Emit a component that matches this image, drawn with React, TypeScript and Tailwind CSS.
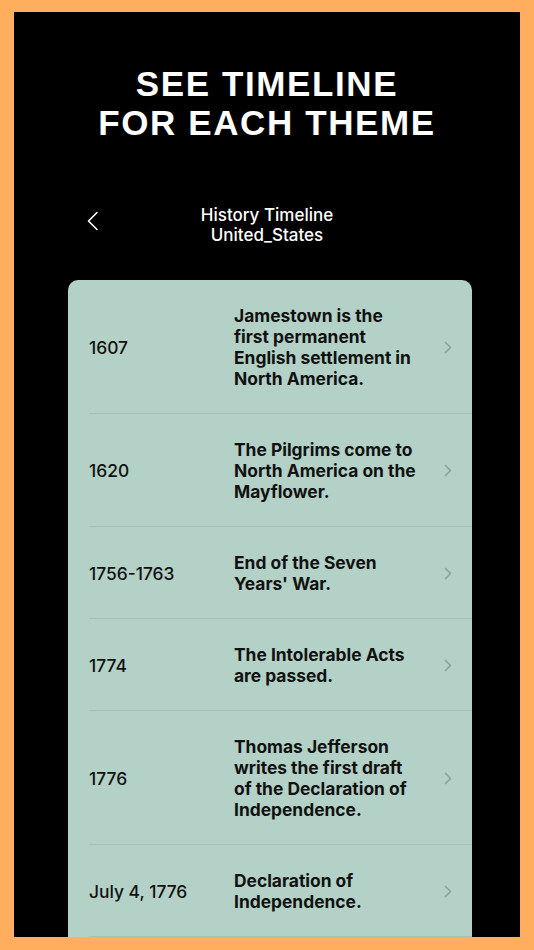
const events = [
  { date: '1607', text: 'Jamestown is the first permanent English settlement in North America.' },
  { date: '1620', text: 'The Pilgrims come to North America on the Mayflower.' },
  { date: '1756-1763', text: "End of the Seven Years' War." },
  { date: '1774', text: 'The Intolerable Acts are passed.' },
  { date: '1776', text: 'Thomas Jefferson writes the first draft of the Declaration of Independence.' },
  { date: 'July 4, 1776', text: 'Declaration of Independence.' },
];

export default function App() {
  return (
    <div className="h-[950px] w-[534px] overflow-hidden bg-[#ffae5e] pt-[12px] pr-[14px] pb-[13px] pl-[14px]">
      <div className="flex h-full flex-col overflow-hidden bg-black">
        <h1 className="pt-[52px] text-center font-['Liberation_Sans',Arial,sans-serif] text-[35px] font-bold leading-[39px] tracking-[1.6px] text-white">
          SEE TIMELINE
          <br />
          FOR EACH THEME
        </h1>

        <div className="relative mt-[63px] flex flex-col items-center font-['Inter',sans-serif] text-[17px] font-medium leading-[20px] text-white">
          <svg className="absolute left-[73px] top-[6px]" width="12" height="20" viewBox="0 0 12 20" fill="none">
            <path d="M10 1.5 1.5 10 10 18.5" stroke="white" strokeWidth="1.6" strokeLinecap="round" strokeLinejoin="round" />
          </svg>
          <span>History Timeline</span>
          <span>United_States</span>
        </div>

        <div className="ml-[54px] mr-[48px] mt-[35px] flex-1 overflow-hidden rounded-t-[10px] bg-[#b3d1c6] font-['Inter',sans-serif] text-[17.4px] leading-[21px] text-[#111]">
          {events.map((e) => (
            <div key={e.date} className="ml-[21px] flex items-center border-b border-[#a2c2b6] pt-[25px] pb-[24px] pr-[20px]">
              <div className="w-[145px] shrink-0 font-medium">{e.date}</div>
              <div className="w-[186px] shrink-0 font-bold">{e.text}</div>
              <svg className="ml-auto" width="8" height="13" viewBox="0 0 8 13" fill="none">
                <path d="M1.5 1.5 6.5 6.5l-5 5" stroke="#8aa59c" strokeWidth="1.7" strokeLinecap="round" strokeLinejoin="round" />
              </svg>
            </div>
          ))}
        </div>
      </div>
    </div>
  );
}
